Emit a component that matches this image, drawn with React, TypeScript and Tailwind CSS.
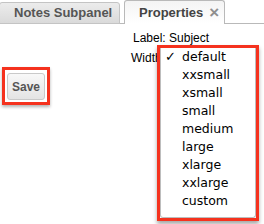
import React from 'react';

const sizes = ['default', 'xxsmall', 'xsmall', 'small', 'medium', 'large', 'xlarge', 'xxlarge', 'custom'];

export default function App() {
  return (
    <div className="relative w-[264px] h-[224px] overflow-hidden bg-white font-['Liberation_Sans',Arial,sans-serif]">
      {/* Tabs */}
      <div className="flex items-end h-[24px] border-b border-[#b9b9b9]">
        <div className="flex items-center h-[22px] w-[121px] -ml-px pl-[14px] mb-[-1px] border border-[#c4c4c4] rounded-t-[3px] bg-gradient-to-b from-[#ececec] to-[#dadada] text-[13px] font-bold text-[#555]">
          Notes Subpanel
        </div>
        <div className="flex items-center h-[24px] w-[101px] ml-[4px] pl-[14px] mb-[-1px] border border-b-0 border-[#b9b9b9] rounded-t-[3px] bg-gradient-to-b from-[#f4f4f4] to-white text-[13px] font-bold text-[#444]">
          Properties
          <span className="ml-[6px] text-[17px] text-[#8f8f8f] font-bold leading-none">×</span>
        </div>
      </div>

      {/* Body */}
      <div className="flex">
        <div className="pl-[2px] pt-[43px]">
          <div className="border-[3px] border-[#f5321e] px-[2px] pt-[3px] pb-[2px] shadow-[0_2px_3px_rgba(0,0,0,0.3)]">
            <div className="flex items-center justify-center w-[38px] h-[27px] rounded-[3px] border border-[#c9c9c9] bg-gradient-to-b from-[#f8f8f8] to-[#e4e4e4] text-[12px] font-bold text-[#555]">
              Save
            </div>
          </div>
        </div>
        <div className="ml-[83px] pt-[7px] text-[12px] text-black leading-[14px]">
          <div>Label: Subject</div>
          <div className="mt-[6px] -ml-[2px]">Width:</div>
        </div>
      </div>

      {/* Width dropdown */}
      <div className="absolute left-[157px] top-[45px] w-[102px] h-[176px] border-[3px] border-[#f5321e] shadow-[0_3px_4px_rgba(0,0,0,0.35)]">
        <div className="h-full bg-white border-x border-b border-[#bdbdbd] rounded-b-[3px] font-['DejaVu_Sans',sans-serif] text-[12.5px] text-black">
          {sizes.map((s, i) => (
            <div key={s} className="flex items-center h-[18px]">
              <span className="w-[21px] pl-[4px] text-[13px] font-bold">{i === 0 ? '✓' : ''}</span>
              <span>{s}</span>
            </div>
          ))}
        </div>
      </div>
    </div>
  );
}
